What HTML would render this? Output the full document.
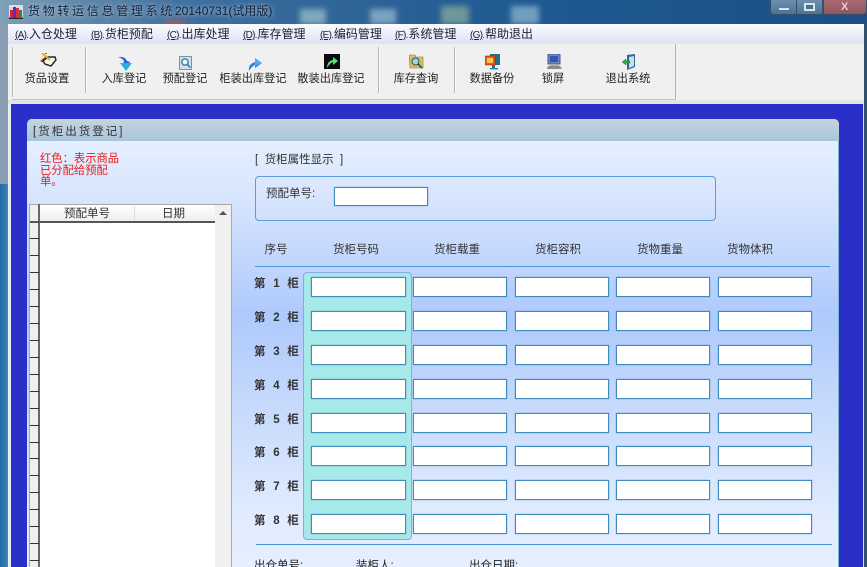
<!DOCTYPE html>
<html lang="zh">
<head>
<meta charset="utf-8">
<style>
html,body{margin:0;padding:0;width:867px;height:567px;overflow:hidden;background:#2a2fc8}
body{position:relative;font-family:"Liberation Sans","Noto Sans CJK SC",sans-serif;font-size:11.5px;color:#222}
div,span,svg{position:absolute;white-space:nowrap}
u{position:static;font-size:10px;letter-spacing:-.7px}
.t{line-height:14px}
.m{top:27px;line-height:14px;color:#223;font-size:12px}
.m i{font-style:normal;font-size:9.5px}
.b{top:72px;line-height:15px;color:#222;text-align:center;transform:translateX(-50%);font-size:11.2px}
.sep{top:47px;height:46px;width:1px;background:#b8b8b8;border-right:1px solid #fafafa}
.in{background:#fff;border:1px solid #3f8dbc;box-sizing:border-box;height:20px;box-shadow:0 0 1px #4a98c8}
.c1{left:311px;width:95px}.c2{left:413px;width:94px}.c3{left:515px;width:94px}.c4{left:616px;width:94px}.c5{left:718px;width:94px}
.l{left:254px;line-height:14px;font-weight:bold;color:#333;word-spacing:4.5px;font-size:11.5px}
.h{top:243px;line-height:14px;color:#333;transform:translateX(-50%)}
.rl{left:30px;width:9px;height:1px;background:#333}
</style>
</head>
<body>
<!-- window chrome -->
<div style="left:0;top:0;width:867px;height:24px;background:linear-gradient(90deg,#7f9fba 0,#5f86a8 10%,#3f6f9e 22%,#2f6496 40%,#1f5a92 60%,#1d4f86 100%)"></div>
<div style="left:165px;top:20px;width:20px;height:4px;background:#a85a60;filter:blur(2px)"></div>
<div style="left:300px;top:9px;width:26px;height:15px;background:#94b9c8;filter:blur(3px);opacity:.8"></div>
<div style="left:370px;top:9px;width:26px;height:15px;background:#90b4cc;filter:blur(3px);opacity:.8"></div>
<div style="left:441px;top:6px;width:28px;height:18px;background:#7fa89c;filter:blur(3px);opacity:.8"></div>
<div style="left:511px;top:6px;width:28px;height:18px;background:#88b0cc;filter:blur(3px);opacity:.8"></div>
<div style="left:0;top:24px;width:8px;height:160px;background:#8a9db2"></div>
<div style="left:0;top:184px;width:8px;height:383px;background:linear-gradient(90deg,#2a6aa0,#2d78b0 60%,#3f8cc0)"></div>
<div style="left:8px;top:24px;width:856px;height:80px;background:#f0f0f0"></div>
<div style="left:864px;top:24px;width:3px;height:543px;background:#33506c"></div>
<div style="left:8px;top:104px;width:3px;height:463px;background:#e8eef4"></div>
<div style="left:863px;top:104px;width:1px;height:463px;background:#d8e0e8"></div>

<!-- app icon -->
<svg style="left:9px;top:5px" width="14" height="14" viewBox="0 0 14 14"><rect width="14" height="14" fill="#d8dce8"/><rect y="12.5" width="14" height="1.5" fill="#222"/><rect x="1" y="5" width="3" height="8" fill="#d8203a"/><rect x="4" y="2" width="3" height="11" fill="#5a2ac8"/><rect x="7" y="3" width="3" height="10" fill="#d83040"/><rect x="10" y="5" width="3" height="8" fill="#2c8a3c"/></svg>
<div class="t" style="left:28px;top:4px;color:#10203a;letter-spacing:2.7px;font-size:12px;text-shadow:0 0 4px #cfe0ee">货物转运信息管理系统</div>
<div class="t" style="left:175px;top:4px;color:#10203a;font-size:12px;text-shadow:0 0 4px #cfe0ee">20140731(试用版)</div>

<!-- window buttons -->
<div style="left:770px;top:0;width:27px;height:15px;box-sizing:border-box;border:1px solid #33506c;border-top:0;border-radius:0 0 0 4px;background:linear-gradient(#6d90ae,#4b7496)"></div>
<div style="left:779px;top:8px;width:10px;height:2px;background:#d8e4ee"></div>
<div style="left:797px;top:0;width:26px;height:15px;box-sizing:border-box;border:1px solid #33506c;border-top:0;border-left:0;background:linear-gradient(#6d90ae,#4b7496)"></div>
<div style="left:804px;top:3px;width:11px;height:8px;box-sizing:border-box;border:2px solid #d8e4ee;background:#47708f"></div>
<div style="left:823px;top:0;width:44px;height:15px;box-sizing:border-box;border:1px solid #33506c;border-top:0;border-radius:0 0 4px 0;background:linear-gradient(#a86a72,#8f5560)"></div>
<div style="left:841px;top:0px;line-height:14px;color:#e8cccc;font-weight:bold;font-size:11px">X</div>

<!-- menu -->
<div style="left:8px;top:24px;width:856px;height:20px;background:linear-gradient(#fafcff,#dde3f4)"></div>
<div class="m" style="left:15px"><u>(A)</u><i>.</i>入仓处理</div>
<div class="m" style="left:91px"><u>(B)</u><i>.</i>货柜预配</div>
<div class="m" style="left:167px"><u>(C)</u><i>.</i>出库处理</div>
<div class="m" style="left:243px"><u>(D)</u><i>.</i>库存管理</div>
<div class="m" style="left:320px"><u>(E)</u><i>.</i>编码管理</div>
<div class="m" style="left:395px"><u>(F)</u><i>.</i>系统管理</div>
<div class="m" style="left:470px"><u>(G)</u><i>.</i>帮助退出</div>

<!-- toolbar -->
<div style="left:8px;top:44px;width:856px;height:56px;background:#f0f0f0"></div>
<div style="left:12px;top:44px;width:664px;height:56px;box-sizing:border-box;border-right:1px solid #b4b4b4;border-bottom:1px solid #c4c4c4"></div>
<div style="left:8px;top:100px;width:856px;height:4px;background:#e2e2e2"></div>
<div class="sep" style="left:12px;height:50px"></div>
<div class="sep" style="left:85px"></div>
<div class="sep" style="left:378px"></div>
<div class="sep" style="left:454px"></div>

<svg style="left:40px;top:53px" width="17" height="14" viewBox="0 0 17 14"><path d="M0 8l5-4 3 2-4 4z" fill="#e02828"/><path d="M5 11L3 8l5-4 7 0 1 3-5 6z" fill="#f4f4f4" stroke="#222" stroke-width="1.4"/><path d="M2 0l8 7" stroke="#d8b020" stroke-width="2"/><path d="M5 0h2" stroke="#222" stroke-width="1.2"/></svg>
<svg style="left:117px;top:56px" width="15" height="15" viewBox="0 0 15 15"><path d="M1 1q7-1 9 4l3 1-2 3H6l1-4Q5 2 1 1z" fill="#1a6ad8"/><path d="M3 7h12l-6 8z" fill="#28b0d8"/></svg>
<svg style="left:179px;top:56px" width="13" height="14" viewBox="0 0 13 14"><rect x=".5" y=".5" width="12" height="13" fill="#cfe2ee" stroke="#6a9ab0"/><circle cx="6" cy="6" r="3.2" fill="#eef8fc" stroke="#3a80a0" stroke-width="1.4"/><path d="M8.3 8.5l3 3" stroke="#3a80a0" stroke-width="1.6"/></svg>
<svg style="left:248px;top:57px" width="14" height="14" viewBox="0 0 14 14"><path d="M1 14Q0 7 7 5V1l7 5-7 5V8Q4 9 1 14z" fill="#2a80e8"/><path d="M7 1l7 5-7 3z" fill="#4ab0f0"/></svg>
<div style="left:324px;top:54px;width:16px;height:15px;background:#0c0c0c"></div>
<svg style="left:324px;top:54px" width="16" height="15" viewBox="0 0 16 15"><path d="M3 14Q3 7 9 6V3l5 4-5 4V8Q6 9 3 14z" fill="#58e070"/></svg>
<svg style="left:409px;top:54px" width="15" height="15" viewBox="0 0 15 15"><path d="M0 1h6l1 2h7v11H1z" fill="#d8c060" stroke="#8a7a30" stroke-width=".6"/><circle cx="6.5" cy="7.5" r="3.5" fill="#9ad8e8" stroke="#305060"/><path d="M9 10l4 4" stroke="#305060" stroke-width="1.6"/></svg>
<svg style="left:485px;top:54px" width="16" height="16" viewBox="0 0 16 16"><rect x="5" y="0" width="10" height="11" fill="#2c6a8c"/><rect x="0" y="2" width="10" height="9" fill="#e85820" stroke="#a82810" stroke-width=".6"/><rect x="2" y="4" width="6" height="5" fill="#f8c850"/><rect x="7" y="11" width="3" height="3" fill="#2c6a8c"/><rect x="5" y="14" width="8" height="1.5" fill="#2c8aa8"/></svg>
<svg style="left:547px;top:54px" width="15" height="16" viewBox="0 0 15 16"><rect x="1" y="0" width="12" height="10" fill="#6a8ac0" stroke="#445a90"/><rect x="3" y="2" width="8" height="6" fill="#3a52b0"/><rect x="3" y="10" width="9" height="2" fill="#aaa"/><path d="M1 12h12l2 3H0z" fill="#8a8a8a"/></svg>
<svg style="left:622px;top:54px" width="14" height="16" viewBox="0 0 14 16"><path d="M5 1l8-1v13l-8 3z" fill="#2c6a90"/><path d="M7 3l5-1v10l-5 2z" fill="#bfe4f4"/><path d="M0 8l4-3v2h4v2H4v2z" fill="#28b040" stroke="#0f6a20" stroke-width=".4"/></svg>

<div class="b" style="left:47px">货品设置</div>
<div class="b" style="left:124px">入库登记</div>
<div class="b" style="left:185px">预配登记</div>
<div class="b" style="left:253px">柜装出库登记</div>
<div class="b" style="left:331px">散装出库登记</div>
<div class="b" style="left:416px">库存查询</div>
<div class="b" style="left:492px">数据备份</div>
<div class="b" style="left:553px">锁屏</div>
<div class="b" style="left:628px">退出系统</div>

<!-- blue area -->
<div style="left:11px;top:104px;width:852px;height:463px;background:#2a2fc8"></div>

<!-- panel -->
<div style="left:27px;top:119px;width:812px;height:448px;border-radius:5px 5px 0 0;background:linear-gradient(#e6f0ff 4%,#d4e3fd 20%,#aec9fb 44%,#c4d8fc 62%,#e0ebfe 88%,#e6efff 100%);border-right:1px solid #78b8d0;box-sizing:border-box"></div>
<div style="left:27px;top:119px;width:812px;height:22px;border-radius:5px 5px 0 0;background:linear-gradient(#c6d4df,#a9c4dc)"></div>
<div class="t" style="left:33px;top:125px;color:#333;letter-spacing:2px">[货柜出货登记]</div>

<!-- red note -->
<div style="left:40px;top:154px;color:#e81c1c;line-height:11.5px;white-space:normal;width:84px;font-size:11.3px">红色：表示商品<br>已分配给预配<br>单。</div>

<!-- grid -->
<div style="left:29px;top:204px;width:203px;height:363px;background:#f0f0f0;border:1px solid #a8a8a8;border-bottom:0;box-sizing:border-box"></div>
<div style="left:39px;top:205px;width:176px;height:17px;background:linear-gradient(#fff,#eee)"></div>
<div style="left:39px;top:222px;width:176px;height:345px;background:#fff"></div>
<div style="left:38px;top:204px;width:2px;height:363px;background:#666"></div>
<div style="left:30px;top:221px;width:185px;height:2px;background:#555"></div>
<div style="left:134px;top:206px;width:1px;height:15px;background:#ddd"></div>
<div class="t" style="left:64px;top:207px;color:#333">预配单号</div>
<div class="t" style="left:162px;top:207px;color:#333">日期</div>
<div style="left:219px;top:211px;width:0;height:0;border:4px solid transparent;border-top:0;border-bottom:4px solid #555"></div>
<div class="rl" style="top:238px"></div><div class="rl" style="top:255px"></div><div class="rl" style="top:272px"></div><div class="rl" style="top:289px"></div><div class="rl" style="top:306px"></div><div class="rl" style="top:323px"></div><div class="rl" style="top:340px"></div><div class="rl" style="top:357px"></div><div class="rl" style="top:374px"></div><div class="rl" style="top:391px"></div><div class="rl" style="top:408px"></div><div class="rl" style="top:425px"></div><div class="rl" style="top:442px"></div><div class="rl" style="top:458px"></div><div class="rl" style="top:475px"></div><div class="rl" style="top:492px"></div><div class="rl" style="top:509px"></div><div class="rl" style="top:526px"></div><div class="rl" style="top:543px"></div><div class="rl" style="top:560px"></div>

<!-- attributes -->
<div class="t" style="left:255px;top:153px;color:#333">[ &nbsp;货柜属性显示 &nbsp;]</div>
<div style="left:255px;top:176px;width:461px;height:45px;box-sizing:border-box;border:1px solid #5a9ade;border-radius:4px"></div>
<div class="t" style="left:266px;top:187px;color:#333">预配单号:</div>
<div class="in" style="left:334px;top:187px;width:94px;height:19px"></div>

<!-- headers -->
<div class="h" style="left:276px">序号</div>
<div class="h" style="left:356px">货柜号码</div>
<div class="h" style="left:457px">货柜载重</div>
<div class="h" style="left:558px">货柜容积</div>
<div class="h" style="left:660px">货物重量</div>
<div class="h" style="left:750px">货物体积</div>
<div style="left:255px;top:266px;width:575px;height:1px;background:#4f94d8"></div>

<!-- teal column -->
<div style="left:303px;top:272px;width:109px;height:268px;box-sizing:border-box;background:#a6e9e8;border:1px solid #8aa8e8;border-radius:4px"></div>

<!-- rows -->
<div class="l" style="top:277px">第 1 柜</div>
<div class="l" style="top:311px">第 2 柜</div>
<div class="l" style="top:345px">第 3 柜</div>
<div class="l" style="top:379px">第 4 柜</div>
<div class="l" style="top:413px">第 5 柜</div>
<div class="l" style="top:446px">第 6 柜</div>
<div class="l" style="top:480px">第 7 柜</div>
<div class="l" style="top:514px">第 8 柜</div>

<div class="in c1" style="top:277px"></div><div class="in c2" style="top:277px"></div><div class="in c3" style="top:277px"></div><div class="in c4" style="top:277px"></div><div class="in c5" style="top:277px"></div>
<div class="in c1" style="top:311px"></div><div class="in c2" style="top:311px"></div><div class="in c3" style="top:311px"></div><div class="in c4" style="top:311px"></div><div class="in c5" style="top:311px"></div>
<div class="in c1" style="top:345px"></div><div class="in c2" style="top:345px"></div><div class="in c3" style="top:345px"></div><div class="in c4" style="top:345px"></div><div class="in c5" style="top:345px"></div>
<div class="in c1" style="top:379px"></div><div class="in c2" style="top:379px"></div><div class="in c3" style="top:379px"></div><div class="in c4" style="top:379px"></div><div class="in c5" style="top:379px"></div>
<div class="in c1" style="top:413px"></div><div class="in c2" style="top:413px"></div><div class="in c3" style="top:413px"></div><div class="in c4" style="top:413px"></div><div class="in c5" style="top:413px"></div>
<div class="in c1" style="top:446px"></div><div class="in c2" style="top:446px"></div><div class="in c3" style="top:446px"></div><div class="in c4" style="top:446px"></div><div class="in c5" style="top:446px"></div>
<div class="in c1" style="top:480px"></div><div class="in c2" style="top:480px"></div><div class="in c3" style="top:480px"></div><div class="in c4" style="top:480px"></div><div class="in c5" style="top:480px"></div>
<div class="in c1" style="top:514px"></div><div class="in c2" style="top:514px"></div><div class="in c3" style="top:514px"></div><div class="in c4" style="top:514px"></div><div class="in c5" style="top:514px"></div>

<div style="left:256px;top:544px;width:576px;height:1px;background:#4f94d8"></div>
<div class="t" style="left:254px;top:559px;color:#222">出仓单号:</div>
<div class="t" style="left:356px;top:559px;color:#222">装柜人:</div>
<div class="t" style="left:469px;top:559px;color:#222">出仓日期:</div>
</body>
</html>
